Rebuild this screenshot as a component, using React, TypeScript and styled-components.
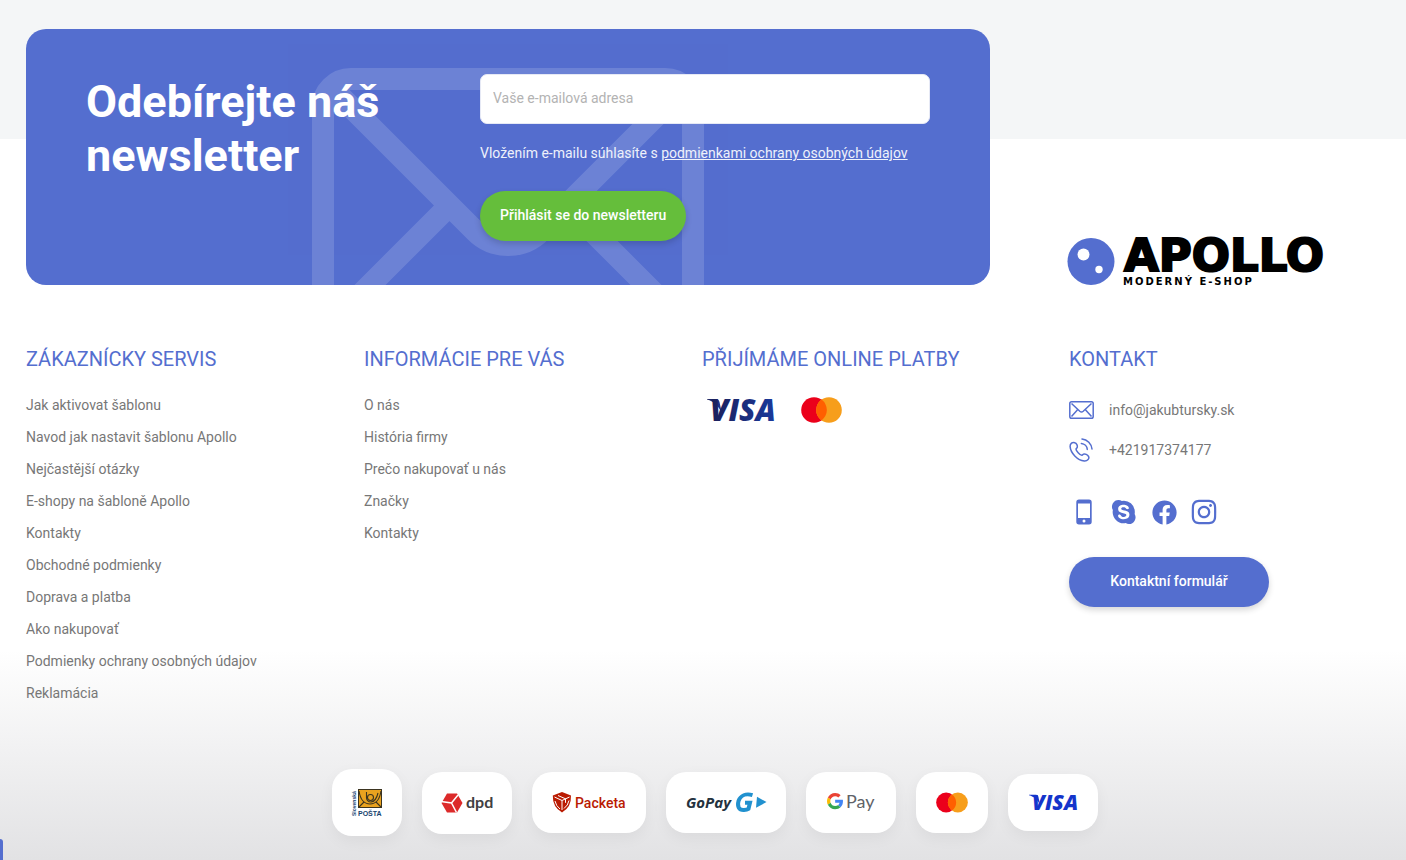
import React from "react";
import styled, { createGlobalStyle } from "styled-components";
import { FaFacebook, FaInstagram } from "react-icons/fa";
import { BiLogoSkype } from "react-icons/bi";

const blue = "#546ecf";

const GlobalStyle = createGlobalStyle`
  *, *::before, *::after { box-sizing: border-box; }
  body {
    margin: 0;
    background: #fff;
    color: #777;
    font-family: Roboto, "Open Sans", sans-serif;
    font-size: 14px;
    line-height: 20px;
  }
  h2, h3, p, ul { margin: 0; padding: 0; }
  ul { list-style: none; }
  a { color: inherit; text-decoration: none; }
  svg { display: block; overflow: visible; }
`;

const Page = styled.footer`
  min-height: 100vh;
  padding-bottom: 24px;
  background:
    linear-gradient(to top, #e2e2e4 0, rgba(255, 255, 255, 0) 210px),
    linear-gradient(#f4f6f7 139px, #fff 139px);
`;

const Row = styled.div`
  display: grid;
  grid-template-columns: 3fr 1fr;
  padding: 0 28px 0 26px;
`;

const TopRow = styled(Row)`
  padding-top: 29px;
`;

const MainRow = styled(Row)`
  padding-top: 60px;
`;

const Newsletter = styled.section`
  position: relative;
  display: grid;
  grid-template-columns: 1fr 450px;
  margin-right: 50px;
  padding: 45px 60px 44px;
  overflow: hidden;
  border-radius: 20px;
  background: ${blue};
  color: #fff;
`;

const Watermark = styled.svg`
  position: absolute;
  left: 286px;
  top: 39px;
  fill: none;
  stroke: #fff;
  stroke-width: 22;
  opacity: 0.14;
`;

const NewsletterTitle = styled.h2`
  position: relative;
  padding-top: 1px;
  font-size: 45px;
  line-height: 54px;
  font-weight: 700;
`;

const Form = styled.form`
  position: relative;
  display: flex;
  flex-direction: column;
  align-items: flex-start;
`;

const EmailInput = styled.input`
  width: 100%;
  height: 50px;
  padding: 0 12px 2px;
  border: 1px solid #e6e9f5;
  border-radius: 7px;
  background: #fff;
  color: #333;
  font: inherit;
  &::placeholder { color: #b3b3b3; opacity: 1; }
`;

const Consent = styled.p`
  margin: 19px 0 28px;
  color: #eef1fb;
  a { text-decoration: underline; }
`;

const Button = styled.button<{ $color: string; $width?: string }>`
  width: ${(p) => p.$width || "auto"};
  height: 50px;
  padding: 0 20px 2px;
  border: 0;
  border-radius: 25px;
  background: ${(p) => p.$color};
  box-shadow: 0 3px 6px rgba(0, 0, 0, 0.16);
  color: #fff;
  font: inherit;
  font-weight: 500;
  cursor: pointer;
`;

const LogoLink = styled.a`
  align-self: end;
  margin-left: 27px;
`;

const LinkColumns = styled.div`
  display: grid;
  grid-template-columns: repeat(3, 1fr);
`;

const Heading = styled.h3`
  margin-bottom: 16px;
  color: ${blue};
  font-size: 20px;
  line-height: 28px;
  font-weight: 400;
  text-transform: uppercase;
  white-space: nowrap;
`;

const LinkItem = styled.li`
  line-height: 32px;
`;

const Payments = styled.div`
  display: flex;
  align-items: center;
  gap: 26px;
  height: 42px;
  padding-left: 5px;
`;

const Contact = styled.section`
  padding-left: 29px;
`;

const ContactList = styled.ul`
  padding-top: 1px;
`;

const ContactItem = styled.li`
  display: flex;
  align-items: center;
  gap: 15px;
  height: 40px;
  svg { flex: none; }
`;

const Socials = styled.ul`
  display: flex;
  gap: 10px;
  margin: 29px 0 32px;
`;

const SocialLink = styled.a`
  display: flex;
  align-items: center;
  justify-content: center;
  width: 30px;
  height: 26px;
  color: ${blue};
  svg { flex: none; }
`;

const Partners = styled.ul`
  display: flex;
  flex-wrap: wrap;
  align-items: center;
  justify-content: center;
  gap: 20px;
  margin-top: 60px;
  padding-left: 24px;
`;

const PartnerCard = styled.li`
  padding: 20px;
  border-radius: 20px;
  background: #fff;
  box-shadow: 0 5px 15px rgba(0, 0, 0, 0.05);
`;

const ChatTab = styled.div`
  position: fixed;
  left: 0;
  bottom: 0;
  width: 3px;
  height: 21px;
  border-radius: 0 3px 0 0;
  background: ${blue};
`;

const ApolloLogo = () => (
  <svg width="262" height="47" viewBox="0 0 262 47" role="img" aria-label="Apollo">
    <circle cx="24" cy="23.500" r="23.500" fill={blue} />
    <circle cx="16.500" cy="16.500" r="6" fill="#fff" />
    <circle cx="32" cy="31.500" r="3.700" fill="#fff" />
    <text x="57" y="33" fontFamily="'DejaVu Sans', sans-serif" fontWeight="700" fontSize="45" stroke="#000" strokeWidth="2">APOLLO</text>
    <text x="56" y="47" fontFamily="'DejaVu Sans', sans-serif" fontWeight="700" fontSize="10" letterSpacing="2">MODERNÝ E-SHOP</text>
  </svg>
);

const VisaLarge = () => (
  <svg width="68" height="26" viewBox="0 0 68 26" role="img" aria-label="Visa">
    <defs>
      <linearGradient id="visa" x1="0" x2="1">
        <stop offset="0" stopColor="#1c1f59" />
        <stop offset="1" stopColor="#1a3a9c" />
      </linearGradient>
    </defs>
    <path d="M0 2h9c2 0 3 1 3.500 3L15 17C12 9 7 4.500 0 2.500z" fill="url(#visa)" />
    <text x="3" y="24" fontFamily="'Open Sans', sans-serif" fontStyle="italic" fontWeight="800" fontSize="30" fill="url(#visa)">VISA</text>
  </svg>
);

const VisaSmall = () => (
  <svg width="50" height="17" viewBox="0 0 50 17" role="img" aria-label="Visa">
    <path d="M1 .700h7c1.500 0 2 .700 2.400 2L12 11C10 6 6 2.500 1 1.200z" fill="#1434cb" />
    <text x="4" y="16" fontFamily="'Open Sans', sans-serif" fontStyle="italic" fontWeight="800" fontSize="21" fill="#1434cb">VISA</text>
  </svg>
);

const Mastercard = ({ width, height }: { width: number; height: number }) => (
  <svg width={width} height={height} viewBox="0 0 41 26" role="img" aria-label="Mastercard">
    <circle cx="13" cy="13" r="12.800" fill="#eb001b" />
    <circle cx="28" cy="13" r="12.800" fill="#f79e1b" />
    <path d="M20.500 2.600a12.800 12.800 0 0 1 0 20.800a12.800 12.800 0 0 1 0-20.800z" fill="#ff5f00" />
  </svg>
);

const MailIcon = () => (
  <svg width="25" height="18" viewBox="0 0 25 18" fill="none" stroke={blue} strokeWidth="1.500" strokeLinejoin="round" aria-hidden="true">
    <rect x=".8" y=".8" width="23.400" height="16.400" rx="1.800" />
    <path d="M2.500 2.500l8.300 7.800q1.700 1.500 3.400 0l8.300-7.800M2.500 15.500l6.300-7M22.500 15.500l-6.300-7" />
  </svg>
);

const PhoneIcon = () => (
  <svg width="25" height="24" viewBox="0 0 25 24" fill="none" stroke={blue} strokeWidth="1.500" strokeLinecap="round" strokeLinejoin="round" aria-hidden="true">
    <path d="M5.800 4.700C3.300 3.700 1 5.700 1.100 8.400C1.500 15 8.500 22.400 15.300 23C18.500 23.200 20.800 20.500 19.600 18.500C18.500 16.600 16 15.400 14.500 16.200L12.900 17.300C11 17.500 6.800 12.500 7 11L8.200 9.500C8.900 7.500 7.500 5.200 5.800 4.700z" />
    <path d="M13 1a11 11 0 0 1 10 10M12.300 5.400a6.500 6.500 0 0 1 6 6" />
  </svg>
);

const MobileIcon = () => (
  <svg width="16" height="26" viewBox="0 0 16 26" aria-hidden="true">
    <path fillRule="evenodd" fill={blue} d="M3 .5h10a2.700 2.700 0 0 1 2.700 2.700v19.600a2.700 2.700 0 0 1-2.700 2.700H3A2.700 2.700 0 0 1 .3 22.800V3.200A2.700 2.700 0 0 1 3 .5zM2 4.500v14.500h12V4.500zM8 20.600a1.500 1.500 0 1 0 0 3a1.500 1.500 0 0 0 0-3z" />
  </svg>
);

const PostaLogo = () => (
  <svg width="30" height="27" viewBox="0 0 30 27" role="img" aria-label="Slovenská pošta">
    <rect x="6.500" y=".5" width="23" height="18" fill="#e9a21f" stroke="#3b3420" />
    <g fill="none" stroke="#3b3420" strokeWidth="1.100">
      <path d="M7 2Q9 15 18 15T29 2M7 18l5-5M29 18l-5-5" />
      <circle cx="18.500" cy="8.500" r="3" />
      <path d="M14.500 3v6q.5 4 4.500 4 5-.5 7-9" />
    </g>
    <text x="6" y="27" fontFamily="'Liberation Sans', sans-serif" fontWeight="700" fontSize="7" fill="#17446f">POŠTA</text>
    <text transform="translate(4 27) rotate(-90)" fontFamily="'Liberation Sans', sans-serif" fontWeight="700" fontSize="5" fill="#17446f">Slovenská</text>
  </svg>
);

const DpdLogo = () => (
  <svg width="50" height="22" viewBox="0 0 50 22" role="img" aria-label="dpd">
    <path d="M5 1.500h10L20.500 11l-5.500 9.500H5L-.5 11z" fill="#dc2a2a" />
    <path d="M-1 9.500l10.500 1.500L14.500 20.500M9.500 11L16 3" fill="none" stroke="#fff" strokeWidth="1.500" />
    <text x="24" y="16" fontFamily="Lato, sans-serif" fontWeight="700" fontSize="16" fill="#414042">dpd</text>
  </svg>
);

const PacketaLogo = () => (
  <svg width="74" height="21" viewBox="0 0 74 21" role="img" aria-label="Packeta">
    <path d="M10 0l9 3.500q.5 11.500-9 17Q.5 15 .8 3.500z" fill="#ba1b02" />
    <path d="M2.500 5l7.500 3.500L17.500 5M10 8.500V18M3 9q1 5 5 8M6 3.500l7.500 3.300v4M17 8.500q-1 5-5 8" fill="none" stroke="#fff" strokeWidth="1" />
    <text x="23" y="16" fontFamily="Roboto, sans-serif" fontWeight="500" fontSize="14" fill="#ba1b02">Packeta</text>
  </svg>
);

const GoPayLogo = () => (
  <svg width="80" height="21" viewBox="0 0 80 21" role="img" aria-label="GoPay">
    <text x="0" y="16" fontFamily="'Open Sans', sans-serif" fontStyle="italic" fontWeight="700" fontSize="15" fill="#24323e">GoPay</text>
    <path d="M66.500 3.200C60 1.200 54.500 3.500 52.500 9C51 14.500 53 18.300 58 18Q61 17.800 62.500 16.800L64 10.700H59" fill="none" stroke="#2191cf" strokeWidth="4" />
    <path d="M71 4.800l9.500 5.200L70 15.800z" fill="#2191cf" />
  </svg>
);

const GooglePayLogo = () => (
  <svg width="50" height="21" viewBox="0 0 50 21" role="img" aria-label="Google Pay">
    <g transform="translate(1 1) scale(.34)">
      <path fill="#EA4335" d="M24 9.500c3.540 0 6.710 1.220 9.210 3.600l6.850-6.850C35.900 2.380 30.470 0 24 0 14.620 0 6.510 5.380 2.560 13.220l7.980 6.190C12.430 13.720 17.740 9.500 24 9.500z" />
      <path fill="#4285F4" d="M46.980 24.550c0-1.570-.15-3.090-.38-4.550H24v9.020h12.940c-.58 2.960-2.260 5.480-4.780 7.180l7.730 6c4.510-4.180 7.090-10.360 7.090-17.650z" />
      <path fill="#FBBC05" d="M10.530 28.590c-.48-1.450-.76-2.990-.76-4.590s.27-3.140.76-4.590l-7.980-6.190C.92 16.460 0 20.120 0 24c0 3.880.92 7.540 2.560 10.780l7.970-6.190z" />
      <path fill="#34A853" d="M24 48c6.480 0 11.930-2.130 15.890-5.810l-7.730-6c-2.150 1.450-4.920 2.300-8.160 2.300-6.260 0-11.570-4.220-13.470-9.910l-7.980 6.190C6.510 42.620 14.620 48 24 48z" />
    </g>
    <text x="20" y="16" fontFamily="Lato, sans-serif" fontSize="18" fill="#5f6368">Pay</text>
  </svg>
);

const serviceLinks = [
  "Jak aktivovat šablonu",
  "Navod jak nastavit šablonu Apollo",
  "Nejčastější otázky",
  "E-shopy na šabloně Apollo",
  "Kontakty",
  "Obchodné podmienky",
  "Doprava a platba",
  "Ako nakupovať",
  "Podmienky ochrany osobných údajov",
  "Reklamácia",
];

const infoLinks = ["O nás", "História firmy", "Prečo nakupovať u nás", "Značky", "Kontakty"];

const LinkList = ({ title, links }: { title: string; links: string[] }) => (
  <nav aria-label={title}>
    <Heading>{title}</Heading>
    <ul>
      {links.map((link) => (
        <LinkItem key={link}><a href="#">{link}</a></LinkItem>
      ))}
    </ul>
  </nav>
);

export default function App() {
  return (
    <>
      <GlobalStyle />
      <Page>
        <TopRow>
          <Newsletter>
            <Watermark width="392" height="217" viewBox="0 0 392 217" aria-hidden="true">
              <rect x="11" y="11" width="370" height="300" rx="28" />
              <path d="M20 20L163 163A46 46 0 0 0 229 163L372 20M137 138L40 235M255 138L352 235" />
            </Watermark>
            <NewsletterTitle>Odebírejte náš<br />newsletter</NewsletterTitle>
            <Form onSubmit={(e) => e.preventDefault()}>
              <EmailInput type="email" aria-label="Vaše e-mailová adresa" placeholder="Vaše e-mailová adresa" />
              <Consent>
                Vložením e-mailu súhlasíte s <a href="#">podmienkami ochrany osobných údajov</a>
              </Consent>
              <Button type="submit" $color="#65be3b">Přihlásit se do newsletteru</Button>
            </Form>
          </Newsletter>
          <LogoLink href="#"><ApolloLogo /></LogoLink>
        </TopRow>

        <MainRow>
          <LinkColumns>
            <LinkList title="Zákaznícky servis" links={serviceLinks} />
            <LinkList title="Informácie pre vás" links={infoLinks} />
            <section>
              <Heading>Přijímáme online platby</Heading>
              <Payments>
                <VisaLarge />
                <Mastercard width={41} height={26} />
              </Payments>
            </section>
          </LinkColumns>
          <Contact>
            <Heading>Kontakt</Heading>
            <ContactList>
              <ContactItem><MailIcon /><a href="mailto:info@jakubtursky.sk">info@jakubtursky.sk</a></ContactItem>
              <ContactItem><PhoneIcon /><a href="tel:+421917374177">+421917374177</a></ContactItem>
            </ContactList>
            <Socials>
              <li><SocialLink href="#" aria-label="Mobil"><MobileIcon /></SocialLink></li>
              <li><SocialLink href="#" aria-label="Skype"><BiLogoSkype size={32} /></SocialLink></li>
              <li><SocialLink href="#" aria-label="Facebook"><FaFacebook size={25} /></SocialLink></li>
              <li><SocialLink href="#" aria-label="Instagram"><FaInstagram size={28} /></SocialLink></li>
            </Socials>
            <Button type="button" $color={blue} $width="200px">Kontaktní formulář</Button>
          </Contact>
        </MainRow>

        <Partners>
          <PartnerCard><PostaLogo /></PartnerCard>
          <PartnerCard><DpdLogo /></PartnerCard>
          <PartnerCard><PacketaLogo /></PartnerCard>
          <PartnerCard><GoPayLogo /></PartnerCard>
          <PartnerCard><GooglePayLogo /></PartnerCard>
          <PartnerCard><Mastercard width={32} height={21} /></PartnerCard>
          <PartnerCard><VisaSmall /></PartnerCard>
        </Partners>
      </Page>
      <ChatTab />
    </>
  );
}
